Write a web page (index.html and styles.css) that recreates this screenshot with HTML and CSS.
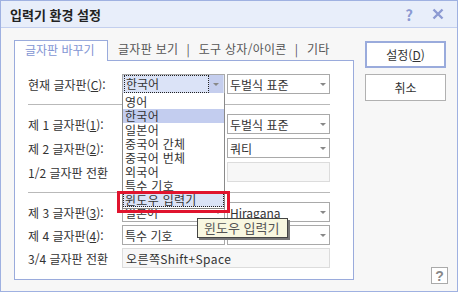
FILE: index.html
```html
<!DOCTYPE html>
<html lang="ko">
<head>
    <meta charset="UTF-8">
    <title>입력기 환경 설정</title>
    <link rel="stylesheet" href="styles.css">
</head>
<body>

    <div class="window">
        <div class="titlebar">
            <span class="title">입력기 환경 설정</span>
            <span class="title-help">?</span>
            <svg class="title-close" width="12" height="12" viewBox="0 0 12 12">
                <path d="M1.5 1.5 L10.5 10.5 M10.5 1.5 L1.5 10.5" stroke="#8c9ad2" stroke-width="2.4" fill="none"/>
            </svg>
        </div>

        <div class="content">
            <div class="main">
                <div class="tabs">
                    <div class="tab active">글자판 바꾸기</div>
                    <span class="tab">글자판 보기</span>
                    <span class="tab-sep">|</span>
                    <span class="tab">도구 상자/아이콘</span>
                    <span class="tab-sep">|</span>
                    <span class="tab">기타</span>
                </div>

                <div class="panel">
                    <div class="row">
                        <span class="label">현재 글자판(<u>C</u>):</span>
                        <div class="select focused">
                            <span class="focus-text">한국어</span>
                            <span class="arrow-box"><i class="arrow"></i></span>
                        </div>
                        <div class="select"><span>두벌식 표준</span><i class="arrow"></i></div>
                    </div>

                    <div class="separator"></div>

                    <div class="group">
                        <div class="row">
                            <span class="label">제 1 글자판(<u>1</u>):</span>
                            <div class="select"><span></span><i class="arrow"></i></div>
                            <div class="select"><span>두벌식 표준</span><i class="arrow"></i></div>
                        </div>
                        <div class="row">
                            <span class="label">제 2 글자판(<u>2</u>):</span>
                            <div class="select"><span></span><i class="arrow"></i></div>
                            <div class="select"><span>쿼티</span><i class="arrow"></i></div>
                        </div>
                        <div class="row">
                            <span class="label">1/2 글자판 전환</span>
                            <div class="field"></div>
                            <div class="field"></div>
                        </div>
                    </div>

                    <div class="separator"></div>

                    <div class="group tight">
                        <div class="row">
                            <span class="label">제 3 글자판(<u>3</u>):</span>
                            <div class="select"><span>일본어</span><i class="arrow"></i></div>
                            <div class="select"><span>Hiragana</span><i class="arrow"></i></div>
                        </div>
                        <div class="row">
                            <span class="label">제 4 글자판(<u>4</u>):</span>
                            <div class="select"><span>특수 기호</span><i class="arrow"></i></div>
                            <div class="select"><span></span><i class="arrow"></i></div>
                        </div>
                        <div class="row">
                            <span class="label">3/4 글자판 전환</span>
                            <div class="field wide">오른쪽Shift+Space</div>
                        </div>
                    </div>

                    <!-- opened dropdown of the current keyboard -->
                    <ul class="dropdown">
                        <li>영어</li>
                        <li class="selected">한국어</li>
                        <li>일본어</li>
                        <li>중국어 간체</li>
                        <li>중국어 번체</li>
                        <li>외국어</li>
                        <li>특수 기호</li>
                        <li class="hover">윈도우 입력기</li>
                    </ul>
                    <div class="mark"></div>
                    <div class="tooltip">윈도우 입력기</div>
                </div>
            </div>

            <div class="side">
                <button class="btn default">설정(<u>D</u>)</button>
                <button class="btn">취소</button>
                <button class="help">?</button>
            </div>
        </div>
    </div>

</body>
</html>
```

FILE: styles.css
```css
body {
    margin: 0;
    font-family: "Noto Sans CJK KR", "Liberation Sans", sans-serif;
    font-size: 12px;
    color: #333;
}

.window {
    width: 458px;
    height: 292px;
    box-sizing: border-box;
    border: 1px solid #9fb1e1;
    background: #f7f7f7;
    display: flex;
    flex-direction: column;
}

.titlebar {
    height: 26px;
    background: #e8eefa;
    border-bottom: 1px solid #c3cfee;
    display: flex;
    align-items: center;
    padding-left: 9px;
}

.title {
    font-size: 13px;
    font-weight: bold;
    color: #222;
    flex: 1;
}

.title-help {
    font-size: 15px;
    font-weight: bold;
    color: #8c9ad2;
    margin-right: 19px;
}

.title-close {
    margin-right: 13px;
}

.content {
    flex: 1;
    display: flex;
    padding: 12px 9px 7px 13px;
}

.main {
    width: 340px;
    display: flex;
    flex-direction: column;
    margin-bottom: 4px;
}

.tabs {
    height: 20px;
    display: flex;
    align-items: flex-start;
    color: #555;
    font-size: 12px;
}

.tab {
    line-height: 18px;
    margin-left: 10px;
    letter-spacing: 0.3px;
}

.tab.active {
    position: relative;
    z-index: 1;
    margin-left: 0;
    width: 94px;
    height: 21px;
    box-sizing: border-box;
    border: 1px solid #9aabdc;
    border-bottom: none;
    background: #fff;
    color: #8395d3;
    padding-left: 10px;
    letter-spacing: 0;
}

.tab-sep {
    line-height: 18px;
    margin: 0 9px 0 8px;
}

.tab-sep + .tab {
    margin-left: 0;
}

.panel {
    position: relative;
    flex: 1;
    border: 1px solid #9aabdc;
    background: #fff;
    padding: 13px 0 0 13px;
}

.row {
    display: flex;
    align-items: center;
    height: 20px;
    gap: 2px;
}

.label {
    width: 92px;
    white-space: nowrap;
}

.group {
    display: flex;
    flex-direction: column;
    gap: 4px;
}

.group.tight {
    gap: 3px;
}

.separator {
    width: 302px;
    height: 1px;
    background: #b9b9b9;
    margin: 10px 0 9px;
}

.select, .field {
    width: 103px;
    height: 20px;
    box-sizing: border-box;
    border: 1px solid #a9a9a9;
    background: #fff;
    display: flex;
    align-items: center;
    justify-content: space-between;
    padding: 0 3px 0 2px;
    white-space: nowrap;
    overflow: hidden;
}

.arrow {
    width: 0;
    height: 0;
    border-left: 3px solid transparent;
    border-right: 3px solid transparent;
    border-top: 3px solid #888;
}

.select.focused {
    padding: 1px;
    background: #dbe3f7;
}

.focus-text {
    flex: 1;
    height: 16px;
    line-height: 15px;
    border: 1px dotted #222;
    padding-left: 1px;
}

.arrow-box {
    width: 14px;
    height: 18px;
    background: #c5ceee;
    display: flex;
    align-items: center;
    justify-content: center;
}

.field {
    background: #f7f7f7;
    border-color: #dcdcdc;
}

.field.wide {
    width: 208px;
    color: #333;
    padding-left: 3px;
    letter-spacing: 0.4px;
}

.dropdown {
    position: absolute;
    left: 107px;
    top: 32px;
    width: 103px;
    box-sizing: border-box;
    margin: 0;
    padding: 2px 0 1px;
    list-style: none;
    background: #fff;
    border: 1px solid #8a8a8a;
    border-top: none;
}

.dropdown li {
    height: 14px;
    line-height: 14px;
    padding-left: 2px;
    font-size: 12px;
    letter-spacing: 0.3px;
}

.dropdown li.selected {
    background: #c3cdef;
}

.dropdown li.hover {
    box-sizing: border-box;
    background: #dbe3f7;
    border: 1px dotted #222;
    padding-left: 1px;
    line-height: 12px;
}

.mark {
    position: absolute;
    left: 102px;
    top: 130px;
    width: 113px;
    height: 22px;
    box-sizing: border-box;
    border: 3px solid #e0142e;
}

.tooltip {
    position: absolute;
    left: 182px;
    top: 157px;
    width: 91px;
    height: 20px;
    box-sizing: border-box;
    border: 1px solid #444;
    background: #f8f7e0;
    color: #555;
    padding-left: 6px;
    font-size: 13px;
    line-height: 18px;
    box-shadow: 2px 2px 0 #777;
}

.side {
    width: 83px;
    margin-left: 11px;
    display: flex;
    flex-direction: column;
    align-items: flex-start;
    padding-top: 1px;
}

.btn {
    width: 81px;
    height: 27px;
    box-sizing: border-box;
    border: 1px solid #b1b1b1;
    background: #fff;
    font-family: inherit;
    font-size: 12px;
    color: #333;
    margin-bottom: 6px;
}

.btn.default {
    border: 2px solid #9aabdc;
}

.help {
    margin-top: auto;
    align-self: flex-end;
    width: 17px;
    height: 17px;
    box-sizing: border-box;
    border: 1px solid #aaa;
    background: #fff;
    padding: 0;
    font-family: "Liberation Sans", sans-serif;
    font-size: 14px;
    font-weight: bold;
    color: #888;
    line-height: 14px;
}
```
